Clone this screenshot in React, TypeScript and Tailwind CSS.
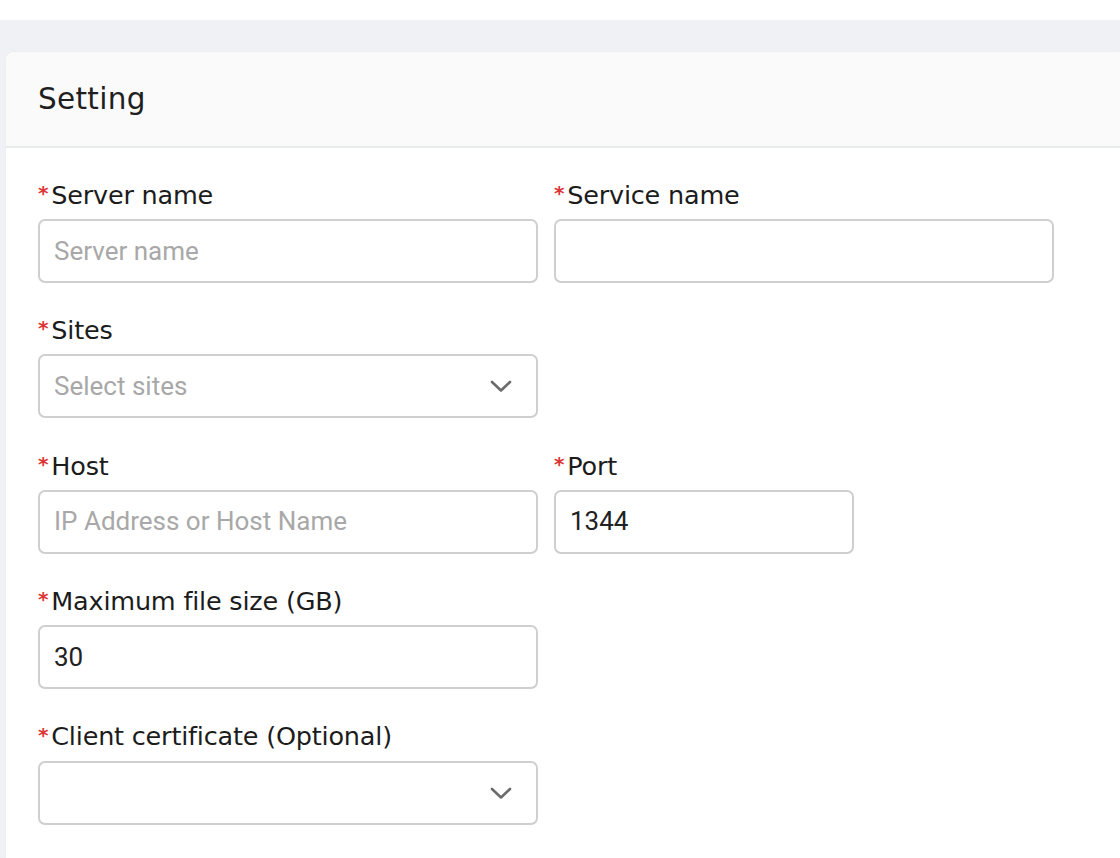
import React from 'react';

const labelFont = { fontFamily: '"DejaVu Sans", sans-serif' };

const Chevron = () => (
  <svg width="22" height="14" viewBox="0 0 22 14" fill="none" className="shrink-0">
    <path d="M2 3l9 8.5L20 3" stroke="#6b6b6b" strokeWidth="2.6" strokeLinecap="round" strokeLinejoin="round" />
  </svg>
);

interface FieldProps {
  label: string;
  width?: string;
  placeholder?: string;
  value?: string;
  select?: boolean;
}

const Field: React.FC<FieldProps> = ({ label, width = 'w-[500px]', placeholder, value, select }) => (
  <div className={`${width} flex flex-col`}>
    <label className="h-[30px] flex items-center text-[25.5px] text-[#1c1c1c] tracking-[-0.2px] mb-[9px]" style={labelFont}>
      <span className="text-[#dc3535] text-[20px] mr-[3px] -mt-[4px] font-bold">*</span>
      {label}
    </label>
    <div className="h-[64px] rounded-[7px] border-2 border-[#cfcfcf] bg-white flex items-center pl-[14px] pr-[24px] font-['Roboto',sans-serif] text-[26px]">
      {select ? (
        <>
          <span className="flex-1 text-[#a8a8a8]">{placeholder}</span>
          <Chevron />
        </>
      ) : value ? (
        <span className="text-[#222]">{value}</span>
      ) : (
        <span className="text-[#a8a8a8]">{placeholder}</span>
      )}
    </div>
  </div>
);

export default function App() {
  return (
    <div className="w-[1120px] h-[858px] overflow-hidden bg-white">
      <div className="h-[20px] bg-white" />
      <div className="h-[838px] bg-[#f0f1f5] pt-[32px] pl-[6px]">
        <div className="h-full bg-white rounded-tl-[8px] shadow-[0_0_1px_rgba(0,0,0,0.12)]">
          <div className="h-[96px] bg-[#fafafa] border-b-2 border-[#e7ebeb] rounded-tl-[8px] flex items-center pl-[32px]">
            <h2 className="text-[29.5px] text-[#1f1f1f] tracking-[0.3px]" style={labelFont}>Setting</h2>
          </div>
          <div className="pl-[32px] pt-[32px] flex flex-col gap-[32.4px]">
            <div className="flex gap-[16px]">
              <Field label="Server name" placeholder="Server name" />
              <Field label="Service name" />
            </div>
            <Field label="Sites" placeholder="Select sites" select />
            <div className="flex gap-[16px]">
              <Field label="Host" placeholder="IP Address or Host Name" />
              <Field label="Port" value="1344" width="w-[300px]" />
            </div>
            <Field label="Maximum file size (GB)" value="30" />
            <Field label="Client certificate (Optional)" select />
          </div>
        </div>
      </div>
    </div>
  );
}
